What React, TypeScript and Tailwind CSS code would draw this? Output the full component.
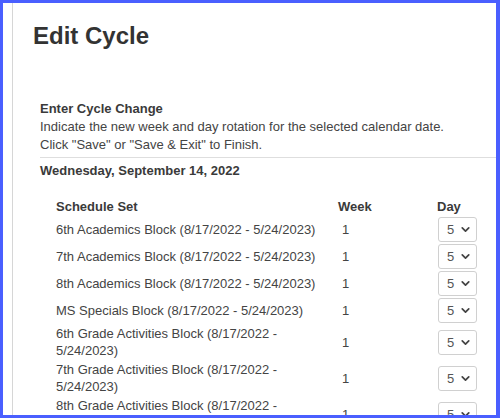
import { ChevronDown } from "lucide-react";

interface ScheduleRow {
  name: string;
  week: number;
  day: number;
}

const rows: ScheduleRow[] = [
  { name: "6th Academics Block (8/17/2022 - 5/24/2023)", week: 1, day: 5 },
  { name: "7th Academics Block (8/17/2022 - 5/24/2023)", week: 1, day: 5 },
  { name: "8th Academics Block (8/17/2022 - 5/24/2023)", week: 1, day: 5 },
  { name: "MS Specials Block (8/17/2022 - 5/24/2023)", week: 1, day: 5 },
  { name: "6th Grade Activities Block (8/17/2022 - 5/24/2023)", week: 1, day: 5 },
  { name: "7th Grade Activities Block (8/17/2022 - 5/24/2023)", week: 1, day: 5 },
  { name: "8th Grade Activities Block (8/17/2022 - 5/24/2023)", week: 1, day: 5 },
];

function DaySelect({ value }: { value: number }) {
  return (
    <div className="flex items-center justify-between w-[39px] h-[25px] border border-[#d0d0d0] rounded-[3px] pl-[8px] pr-[4px] text-[#555] bg-white">
      <span>{value}</span>
      <ChevronDown size={13} strokeWidth={3.2} className="text-[#444]" />
    </div>
  );
}

export default function App() {
  return (
    <div
      className="w-[500px] h-[418px] overflow-hidden bg-white border-t-[3px] border-l-[3px] border-r-[4px] border-b-[3px] border-[#4a5fff] text-[13px] text-[#444]"
      style={{ fontFamily: '"Liberation Sans", Arial, sans-serif' }}
    >
      <div className="ml-[9px] h-full border-l border-[#d6d6d6]">
        {/* Title */}
        <h1 className="pl-[20px] pt-[19px] text-[24px] leading-[28px] font-bold text-[#333]">
          Edit Cycle
        </h1>

        {/* Intro */}
        <div className="ml-[27px] mt-[50px] pb-[3px] border-b border-[#dedede] leading-[18px]">
          <p className="font-bold text-[#3a3a3a]">Enter Cycle Change</p>
          <p>Indicate the new week and day rotation for the selected calendar date.</p>
          <p>Click "Save" or "Save &amp; Exit" to Finish.</p>
        </div>

        <div className="ml-[27px] mt-[4px]">
          <p className="font-bold text-[#3a3a3a] leading-[18px]">Wednesday, September 14, 2022</p>

          <table className="ml-[16px] mt-[17px] table-fixed border-collapse leading-[17px]">
            <colgroup>
              <col className="w-[282px]" />
              <col className="w-[99px]" />
              <col className="w-[50px]" />
            </colgroup>
            <thead>
              <tr className="text-left font-bold text-[#3a3a3a]">
                <th className="py-[1px] pr-[6px] font-bold">Schedule Set</th>
                <th className="py-[1px] font-bold">Week</th>
                <th className="py-[1px] font-bold">Day</th>
              </tr>
            </thead>
            <tbody>
              {rows.map((r) => (
                <tr key={r.name}>
                  <td className="py-[1px] pr-[20px] align-middle">{r.name}</td>
                  <td className="py-[1px] pl-[4px] align-middle">{r.week}</td>
                  <td className="py-[1px] pl-[1px] align-middle">
                    <DaySelect value={r.day} />
                  </td>
                </tr>
              ))}
            </tbody>
          </table>
        </div>
      </div>
    </div>
  );
}
